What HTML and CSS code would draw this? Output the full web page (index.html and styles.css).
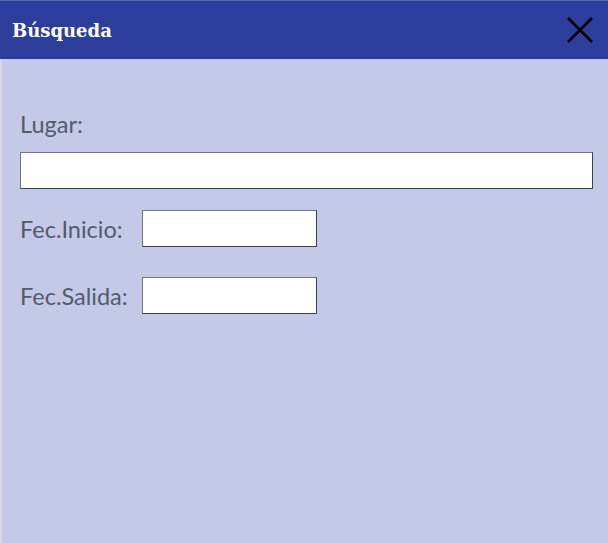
FILE: index.html
```html
<!DOCTYPE html>
<html lang="es">
<head>
<meta charset="utf-8">
<title>Búsqueda</title>
<link rel="stylesheet" href="styles.css">
</head>
<body>
<div class="dialog">
  <header class="titlebar">
    <h1 class="title">Búsqueda</h1>
    <button class="close" aria-label="Cerrar">
      <svg width="28" height="28" viewBox="0 0 28 28"><path d="M2 2 L26 26 M26 2 L2 26" stroke="#000" stroke-width="2.6" fill="none"/></svg>
    </button>
  </header>
  <main class="content">
    <label class="label-block">Lugar:</label>
    <input class="field field-wide" type="text">
    <div class="row">
      <label class="label-inline">Fec.Inicio:</label>
      <input class="field field-short" type="text">
    </div>
    <div class="row">
      <label class="label-inline">Fec.Salida:</label>
      <input class="field field-short" type="text">
    </div>
  </main>
</div>
</body>
</html>
```
FILE: styles.css
```css
html, body {
  margin: 0;
  padding: 0;
  width: 608px;
  height: 543px;
  overflow: hidden;
}
body {
  font-family: Lato, "Noto Sans", sans-serif;
}
.dialog {
  width: 608px;
  height: 543px;
  display: flex;
  flex-direction: column;
  background: #c5c9e8;
  border-left: 2px solid #d6d8e8;
  box-sizing: border-box;
}
.titlebar {
  height: 59px;
  background: #2d3d9c;
  border-top: 1px solid #5a66b0;
  box-sizing: border-box;
  display: flex;
  align-items: center;
  justify-content: space-between;
  padding: 0 14px 0 12px;
  margin-left: -2px;
}
.title {
  margin: 0;
  color: #fff;
  font-family: "DejaVu Serif", "Liberation Serif", serif;
  font-weight: bold;
  font-size: 18px;
  letter-spacing: 0;
}
.close {
  background: none;
  border: 0;
  padding: 0;
  width: 28px;
  height: 28px;
  display: flex;
}
.content {
  padding: 51px 13px 0 18px;
  display: flex;
  flex-direction: column;
}
.label-block, .label-inline {
  color: #525b6c;
  font-size: 23.5px;
  line-height: 28px;
}
.label-block {
  margin-bottom: 14px;
}
.field {
  height: 37px;
  box-sizing: border-box;
  background: #fff;
  border: 1px solid;
  border-color: #707684 #3b4150 #3b4150 #707684;
  outline: none;
  margin: 0;
}
.field-wide {
  width: 573px;
}
.row {
  display: flex;
  align-items: center;
  gap: 0;
  margin-top: 21px;
}
.row + .row {
  margin-top: 30px;
}
.label-inline {
  width: 122px;
}
.field-short {
  width: 175px;
}
```
